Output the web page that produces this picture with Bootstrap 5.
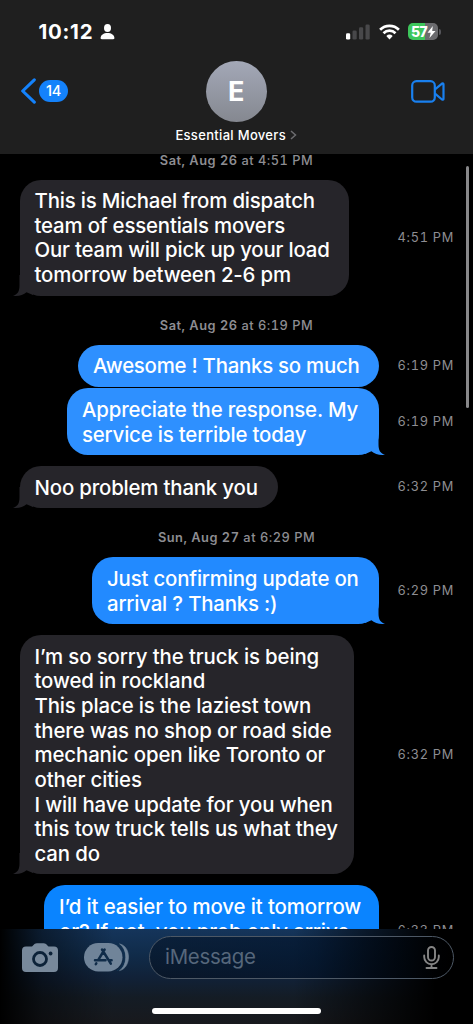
<!DOCTYPE html>
<html lang="en" data-bs-theme="dark">
<head>
<meta charset="utf-8">
<meta name="viewport" content="width=device-width, initial-scale=1">
<title>Essential Movers</title>
<link href="https://cdn.jsdelivr.net/npm/bootstrap@5.3.0/dist/css/bootstrap.min.css" rel="stylesheet">
<style>
  body { background: #000; font-family: Inter, "Liberation Sans", sans-serif; color: #fff; }
  svg { display: block; flex: none; }
  .phone { width: 473px; height: 1024px; }
  .topbar { height: 154px; background: #1f1f1f; }
  .status { height: 61px; padding: 2px 32px 0 38.5px; }
  .clock { font-size: 20.4px; font-weight: 700; letter-spacing: .75px; line-height: 24px; width: 57px; white-space: nowrap; }
  .battery { width: 30px; height: 17px; border-radius: 5px; background: linear-gradient(90deg, #3dc65b 57%, #6b6b6e 57%); font-size: 14px; font-weight: 800; letter-spacing: -.6px; padding-left: 3px; }
  .nub { width: 2px; height: 6px; border-radius: 0 2px 2px 0; background: #55555a; margin-left: 1px; }
  .titlebar { height: 93px; padding: 0 28.5px 0 21px; }
  .back { width: 168px; height: 60px; }
  .facetime { width: 160.5px; height: 60px; }
  .unread { width: 29px; height: 22px; border-radius: 11px; background: #1482fb; font-size: 14.5px; font-weight: 500; letter-spacing: -.3px; margin-left: 3px; }
  .avatar { width: 61px; height: 61px; background: linear-gradient(#a3a8b7, #858890); font-size: 27px; font-weight: 700; padding-top: 1px; }
  .contact { font-size: 13px; font-weight: 500; line-height: 16px; margin-top: 5px; letter-spacing: .32px; white-space: nowrap; }
  .thread { height: 775px; }
  .stamp { height: 20px; line-height: 20px; font-size: 12.8px; color: #8d8d92; letter-spacing: .5px; font-weight: 500; margin: 20px 0 9.3px; font-variant-numeric: tabular-nums; }
  .stamp b { font-weight: 600; }
  .stamp.first { margin: -3px 0 8.5px; }
  .msg { padding: 0 19px 0 19.5px; }
  .msg.gap-above { margin-top: 11px; }
  .msg.stacked { margin-top: 1.5px; }
  .when { width: 75px; text-align: right; font-size: 12.8px; color: #8d8d92; letter-spacing: .7px; white-space: nowrap; font-variant-numeric: tabular-nums; }
  .bubble { border-radius: 21px; padding: 9.6px 15px 7.8px; font-size: 20.4px; line-height: 24.65px; font-weight: 500; letter-spacing: -.18px; white-space: nowrap; }
  .bubble.in { background: #26252a; }
  .bubble.out { background: #2e90ff; margin-left: auto; }
  .bubble.mid { background: #228aff; }
  .bubble.low { background: #0a84ff; }
  .tail { position: absolute; bottom: 0; width: 20px; height: 21px; fill: #26252a; left: -6.5px; }
  .out .tail { left: auto; right: -6px; transform: scaleX(-1); fill: #2e90ff; }
  .mid .tail { fill: #228aff; }
  .w-a { width: 329.5px; }
  .w-b { width: 301px; letter-spacing: -.25px; }
  .w-c { width: 312px; }
  .w-d { width: 258.5px; }
  .w-e { width: 287px; }
  .w-f { width: 334.5px; letter-spacing: -.12px; }
  .w-g { width: 335px; letter-spacing: -.1px; }
  .scroller { position: absolute; right: 4px; top: 12px; width: 3px; height: 242px; border-radius: 2px; background: #88888a; }
  .composer { height: 95px;
    background: linear-gradient(90deg, #000 0, rgba(0,0,0,.45) 9%, transparent 24%, transparent 62%, rgba(0,0,0,.55) 78%, #000 92%),
      linear-gradient(#15355b 0, #102b49 28%, #112137 52%, #141c25 72%, #18191d 100%); }
  .tools { height: 56px; padding: 0 19px 0 22px; }
  .entry { width: 305px; height: 43px; border: 1px solid #4d5865; border-radius: 22px; background: linear-gradient(90deg, rgba(0,10,24,.45), rgba(0,16,38,.6) 55%, rgba(0,0,0,.7)); padding: 0 13.5px 0 15px; font-size: 20.4px; color: #56677b; letter-spacing: -.25px; }
  .home { width: 169px; height: 6px; border-radius: 3px; background: #fff; margin: 23px auto 0; }
</style>
</head>
<body>
<div class="phone d-flex flex-column overflow-hidden">
  <header class="topbar">
    <div class="status d-flex align-items-center">
      <span class="clock">10:12</span>
      <svg class="ms-1" width="15" height="16" viewBox="0 0 15 16" fill="#fff"><ellipse cx="7.500" cy="4" rx="3.500" ry="3.900"/><path d="M.6 14C.6 11 3.700 9 7.500 9s6.900 2 6.900 5c0 .8-.4 1.200-1.200 1.200H1.800C1 15.200.6 14.800.6 14z"/></svg>
      <svg class="ms-auto" width="25" height="16" viewBox="0 0 25 16"><rect x="0" y="9.300" width="4.200" height="6.200" rx="1.300" fill="#fff"/><g fill="#48484a"><rect x="6.500" y="6.500" width="4.200" height="9" rx="1.300"/><rect x="13" y="3.300" width="4.200" height="12.200" rx="1.300"/><rect x="19.500" y=".5" width="4.200" height="15" rx="1.300"/></g></svg>
      <svg class="ms-2" width="21" height="16" viewBox="0 0 21 16" fill="none" stroke="#fff" stroke-width="2.700"><path d="M1.100 5.700a13.300 13.300 0 0 1 18.800 0"/><path d="M4.500 9.200a8.500 8.500 0 0 1 12 0"/><path d="M10.500 15.400L7.300 12.100a4.700 4.700 0 0 1 6.400 0z" fill="#fff" stroke="none"/></svg>
      <div class="battery d-flex align-items-center ms-2"><span>57</span><svg width="9" height="12" viewBox="0 0 9 12" fill="#fff"><path d="M5.800 0L.5 6.800h3.200L2.500 12 8.500 5H5.200z"/></svg></div><i class="nub"></i>
    </div>
    <div class="titlebar d-flex justify-content-between">
      <div class="back d-flex align-items-center">
        <svg width="15" height="26" viewBox="0 0 15 26" fill="none" stroke="#1482fb" stroke-width="3.100" stroke-linecap="round" stroke-linejoin="round"><path d="M13.300 1.800L1.700 13l11.600 11.200"/></svg>
        <span class="unread d-flex align-items-center justify-content-center">14</span>
      </div>
      <div class="d-flex flex-column align-items-center">
        <div class="avatar rounded-circle d-flex align-items-center justify-content-center">E</div>
        <div class="contact d-flex align-items-center">Essential Movers<svg class="ms-1" width="7" height="10" viewBox="0 0 7 10" fill="none" stroke="#6d6d70" stroke-width="1.500"><path d="M1 1l4.500 4L1 9"/></svg></div>
      </div>
      <div class="facetime d-flex align-items-center justify-content-end">
        <svg width="34" height="23" viewBox="0 0 34 23" fill="none" stroke="#1980ef" stroke-width="2.200" stroke-linejoin="round"><rect x="1.200" y="1.200" width="22.600" height="20.500" rx="4.200"/><path d="M24 9.300L31 3.600q1.500-.7 1.500.8v14.300q0 1.500-1.500.8L24 13.600"/></svg>
      </div>
    </div>
  </header>

  <main class="thread position-relative overflow-hidden flex-shrink-0">
    <div class="stamp first text-center"><b>Sat, Aug 26</b> at 4:51 PM</div>
    <div class="msg d-flex align-items-center justify-content-between">
      <div class="bubble in w-a position-relative">This is Michael from dispatch<br>team of essentials movers<br>Our team will pick up your load<br>tomorrow between 2-6 pm<svg class="tail" viewBox="0 0 20 21"><path d="M6.500 0V10C6.500 16 5 19.500 0 20.700 5 21.500 10.500 20 13.500 17.200L20 20V0z"/></svg></div>
      <span class="when">4:51 PM</span>
    </div>
    <div class="stamp text-center"><b>Sat, Aug 26</b> at 6:19 PM</div>
    <div class="msg d-flex align-items-center">
      <div class="bubble out w-b">Awesome ! Thanks so much</div>
      <span class="when">6:19 PM</span>
    </div>
    <div class="msg stacked d-flex align-items-center">
      <div class="bubble out w-c position-relative">Appreciate the response. My<br>service is terrible today<svg class="tail" viewBox="0 0 20 21"><path d="M6.500 0V10C6.500 16 5 19.500 0 20.700 5 21.500 10.500 20 13.500 17.200L20 20V0z"/></svg></div>
      <span class="when">6:19 PM</span>
    </div>
    <div class="msg gap-above d-flex align-items-center justify-content-between">
      <div class="bubble in w-d position-relative">Noo problem thank you<svg class="tail" viewBox="0 0 20 21"><path d="M6.500 0V10C6.500 16 5 19.500 0 20.700 5 21.500 10.500 20 13.500 17.200L20 20V0z"/></svg></div>
      <span class="when">6:32 PM</span>
    </div>
    <div class="stamp text-center"><b>Sun, Aug 27</b> at 6:29 PM</div>
    <div class="msg d-flex align-items-center">
      <div class="bubble out mid w-e position-relative">Just confirming update on<br>arrival ? Thanks :)<svg class="tail" viewBox="0 0 20 21"><path d="M6.500 0V10C6.500 16 5 19.500 0 20.700 5 21.500 10.500 20 13.500 17.200L20 20V0z"/></svg></div>
      <span class="when">6:29 PM</span>
    </div>
    <div class="msg gap-above d-flex align-items-center justify-content-between">
      <div class="bubble in w-f position-relative">I’m so sorry the truck is being<br>towed in rockland<br>This place is the laziest town<br>there was no shop or road side<br>mechanic open like Toronto or<br>other cities<br>I will have update for you when<br>this tow truck tells us what they<br>can do<svg class="tail" viewBox="0 0 20 21"><path d="M6.500 0V10C6.500 16 5 19.500 0 20.700 5 21.500 10.500 20 13.500 17.200L20 20V0z"/></svg></div>
      <span class="when">6:32 PM</span>
    </div>
    <div class="msg gap-above d-flex align-items-center">
      <div class="bubble out low w-g">I’d it easier to move it tomorrow<br>or? If not, you prob only arrive<br>late</div>
      <span class="when">6:33 PM</span>
    </div>
    <div class="scroller"></div>
  </main>

  <footer class="composer flex-shrink-0">
    <div class="tools d-flex align-items-center">
      <svg width="36" height="29" viewBox="0 0 36 29"><path d="M4 3.500h6L12.500 1q1-.8 2.500-.8h6.500q1.500 0 2.500.8l2.500 2.500H32a4 4 0 0 1 4 4V25a4 4 0 0 1-4 4H4a4 4 0 0 1-4-4V7.500a4 4 0 0 1 4-4z" fill="#78899b"/><circle cx="18" cy="16" r="6.500" fill="none" stroke="#0c2238" stroke-width="2.800"/><circle cx="28.600" cy="10.500" r="1.900" fill="#0c2238"/></svg>
      <svg style="margin-left:26px" width="45" height="29" viewBox="0 0 45 29" fill="#708499"><rect width="38.500" height="28.500" rx="14.200"/><path d="M35.500.9C47.500 3 47.500 25 35.500 27.600 43.500 22 43.500 6.500 35.500.9z" stroke="#708499" stroke-width=".6" stroke-linejoin="round"/><path d="M33 .9C43 6 43 22.500 33 27.600" fill="none" stroke="#11304f" stroke-width="1.300"/><g stroke="#102c49" stroke-width="2.500" stroke-linecap="round" fill="none"><path d="M18 6.500l8.800 14.200M20.600 6.500L14 17.300M11 17.300h10.500M25 17.300h2.600M12.300 20.300l-.5.800"/></g></svg>
      <div class="entry ms-auto d-flex align-items-center justify-content-between"><span>iMessage</span>
        <svg width="17" height="23" viewBox="0 0 17 23" fill="none" stroke="#858585" stroke-width="1.900" stroke-linecap="round"><rect x="5" y="1" width="7" height="13.500" rx="3.500"/><path d="M1.200 9.500v1.500a7.300 7.300 0 0 0 14.600 0V9.500M8.500 18.300V22M3.500 22h10"/></svg>
      </div>
    </div>
    <div class="home"></div>
  </footer>
</div>
<script src="https://cdn.jsdelivr.net/npm/bootstrap@5.3.0/dist/js/bootstrap.bundle.min.js"></script>
</body>
</html>
